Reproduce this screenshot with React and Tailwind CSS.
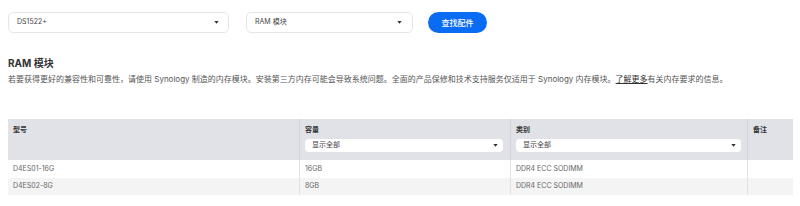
import React from "react";

const Caret = ({ className = "" }) => (
  <svg width="5" height="3" viewBox="0 0 5 3" className={className}>
    <path d="M0.3 0 L4.7 0 L2.5 2.8 Z" fill="#333" />
  </svg>
);

const font = { fontFamily: '"Inter", "Noto Sans CJK SC", sans-serif' };

export default function App() {
  return (
    <div className="w-[800px] h-[206px] bg-white overflow-hidden text-[#555]" style={font}>
      <div className="px-[8px]">
        <div className="flex items-center pt-[12px] h-[33px]">
          <div className="w-[221px] h-[21px] border border-[#e6e6e6] rounded-[5px] flex items-center justify-between pl-[8px] pr-[9px] text-[7px] text-[#444]">
            <span>DS1522+</span>
            <Caret />
          </div>
          <div className="ml-[17px] w-[167px] h-[21px] border border-[#e6e6e6] rounded-[5px] flex items-center justify-between pl-[8px] pr-[10px] text-[7px] text-[#444]">
            <span>RAM 模块</span>
            <Caret />
          </div>
          <div className="ml-[15px] w-[59px] h-[21px] rounded-full bg-[#0a6cf2] flex items-center justify-center text-white text-[8px] font-medium">
            查找配件
          </div>
        </div>
        <div className="mt-[23px] text-[10px] font-bold text-[#333] leading-[14px]">RAM 模块</div>
        <div className="mt-[4px] text-[8px] leading-[10px] text-[#555] whitespace-nowrap">
          若要获得更好的兼容性和可靠性，请使用 Synology 制造的内存模块。安装第三方内存可能会导致系统问题。全面的产品保修和技术支持服务仅适用于 Synology 内存模块。
          <span className="underline text-[#333]">了解更多</span>有关内存要求的信息。
        </div>
        <div className="mt-[35px] w-[785px] text-[7px]">
          <div className="flex h-[41px] bg-[#e1e2e7]">
            <div className="w-[292px] border-r border-[#d2d3d8] pl-[5px] pt-[6px] font-semibold text-[#333]">型号</div>
            <div className="w-[211px] border-r border-[#d2d3d8] px-[5px] pt-[6px]">
              <div className="font-semibold text-[#333] leading-[10px]">容量</div>
              <div className="mt-[4px] h-[13px] w-[198px] bg-white rounded-[4px] flex items-center justify-between pl-[7px] pr-[5px] text-[#444]">
                <span>显示全部</span>
                <Caret />
              </div>
            </div>
            <div className="w-[237px] border-r border-[#d2d3d8] px-[5px] pt-[6px]">
              <div className="font-semibold text-[#333] leading-[10px]">类别</div>
              <div className="mt-[4px] h-[13px] w-[225px] bg-white rounded-[4px] flex items-center justify-between pl-[7px] pr-[5px] text-[#444]">
                <span>显示全部</span>
                <Caret />
              </div>
            </div>
            <div className="flex-1 pl-[5px] pt-[6px] font-semibold text-[#333]">备注</div>
          </div>
          <div className="flex h-[18px] bg-white items-stretch text-[#666]">
            <div className="w-[292px] border-r border-[#e2e2e2] pl-[5px] flex items-center">D4ES01-16G</div>
            <div className="w-[211px] border-r border-[#e2e2e2] pl-[5px] flex items-center">16GB</div>
            <div className="w-[237px] border-r border-[#e2e2e2] pl-[5px] flex items-center">DDR4 ECC SODIMM</div>
            <div className="flex-1"></div>
          </div>
          <div className="flex h-[17px] bg-[#f4f4f4] items-stretch text-[#666]">
            <div className="w-[292px] border-r border-[#e2e2e2] pl-[5px] flex items-center">D4ES02-8G</div>
            <div className="w-[211px] border-r border-[#e2e2e2] pl-[5px] flex items-center">8GB</div>
            <div className="w-[237px] border-r border-[#e2e2e2] pl-[5px] flex items-center">DDR4 ECC SODIMM</div>
            <div className="flex-1"></div>
          </div>
        </div>
      </div>
    </div>
  );
}
